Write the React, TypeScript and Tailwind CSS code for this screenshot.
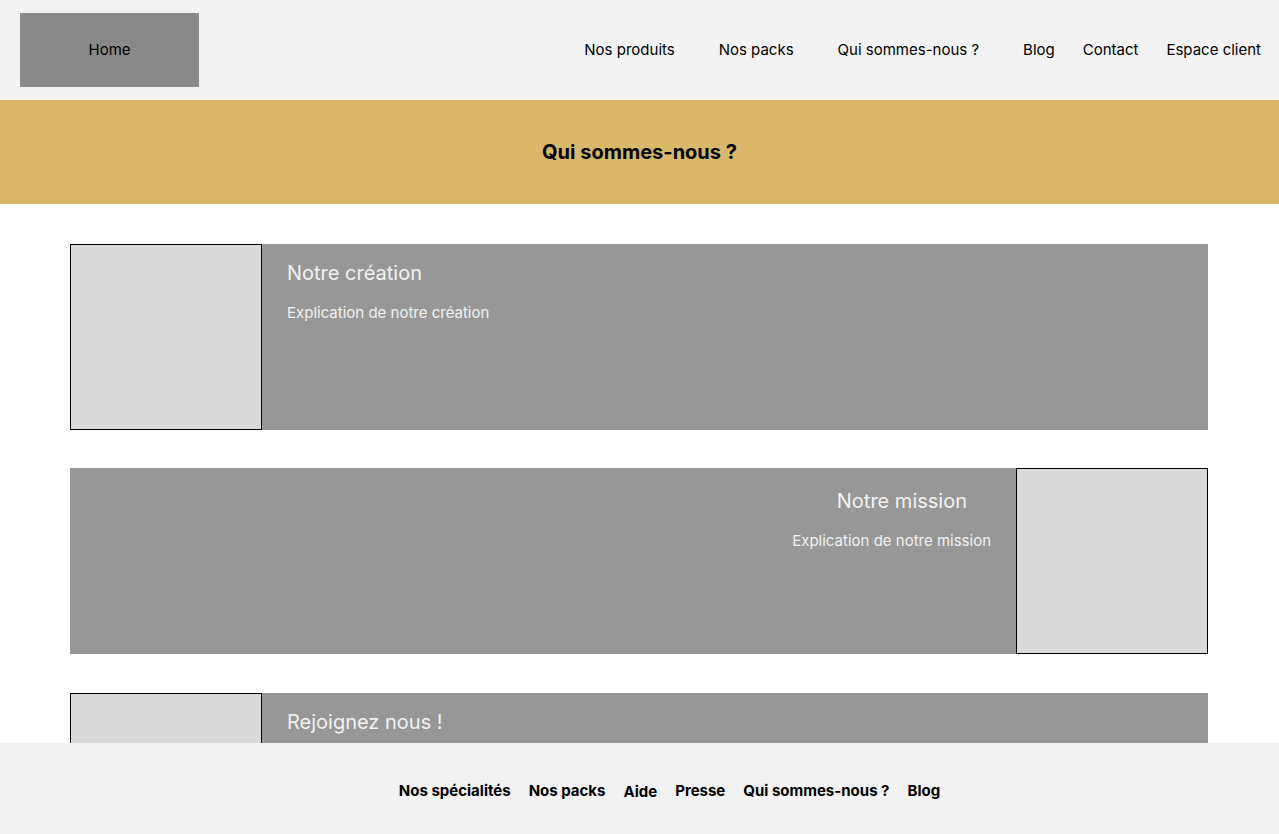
import React from 'react';

const navItems = [
  { label: 'Nos produits', cls: 'mr-[44px]' },
  { label: 'Nos packs', cls: 'mr-[44px]' },
  { label: 'Qui sommes-nous ?', cls: 'mr-[44px]' },
  { label: 'Blog', cls: 'mr-[28px]' },
  { label: 'Contact', cls: 'mr-[28px]' },
  { label: 'Espace client', cls: '' },
];

const footerItems = ['Nos spécialités', 'Nos packs', 'Aide', 'Presse', 'Qui sommes-nous ?', 'Blog'];

function Card({ title, text, reverse, className = '' }: { title: string; text: string; reverse?: boolean; className?: string }) {
  return (
    <div className={`flex h-[186px] ${reverse ? 'flex-row-reverse' : 'flex-row'} ${className}`}>
      <div className="w-[192px] shrink-0 border border-black bg-[#d9d9d9]" />
      <div className={`flex-1 bg-[#979797] pt-[17px] text-[#f2f2f2] ${reverse ? 'text-right' : 'pl-[25px]'}`}>
        <h2 className={`text-[20px] leading-[24px] ${reverse ? 'pr-[49px] pt-[4px]' : ''}`}>{title}</h2>
        <p className={`mt-[18px] text-[15px] leading-[20px] ${reverse ? 'pr-[25px]' : ''}`}>{text}</p>
      </div>
    </div>
  );
}

export default function App() {
  return (
    <div className="min-h-screen bg-white font-['Inter',sans-serif] text-black">
      {/* Header */}
      <header className="flex h-[100px] items-center bg-[#f3f3f3] pl-[20px] pr-[18px]">
        <div className="flex h-[74px] w-[179px] items-center justify-center bg-[#898989] text-[15px]">
          Home
        </div>
        <nav className="ml-auto flex items-center text-[15px]">
          {navItems.map((n) => (
            <span key={n.label} className={n.cls}>
              {n.label}
            </span>
          ))}
        </nav>
      </header>

      {/* Banner */}
      <div className="flex h-[104px] items-center justify-center bg-[#d9b86a]">
        <h1 className="text-[20px] font-bold">Qui sommes-nous ?</h1>
      </div>

      {/* Content */}
      <main className="flex flex-col gap-[38px] pl-[70px] pr-[71px] pt-[40px] pb-[140px]">
        <Card title="Notre création" text="Explication de notre création" />
        <Card title="Notre mission" text="Explication de notre mission" reverse />
        <Card title="Rejoignez nous !" text="Explication pour nous rejoindre" className="mt-[1px]" />
      </main>

      {/* Footer */}
      <footer className="fixed inset-x-0 bottom-0 flex h-[91px] items-center justify-center gap-[18px] bg-[#f2f2f2] pl-[60px] pt-[5px] text-[15px] font-bold">
        {footerItems.map((f) => (
          <span key={f} className={f === 'Aide' ? 'translate-y-[1px]' : ''}>
            {f}
          </span>
        ))}
      </footer>
    </div>
  );
}
